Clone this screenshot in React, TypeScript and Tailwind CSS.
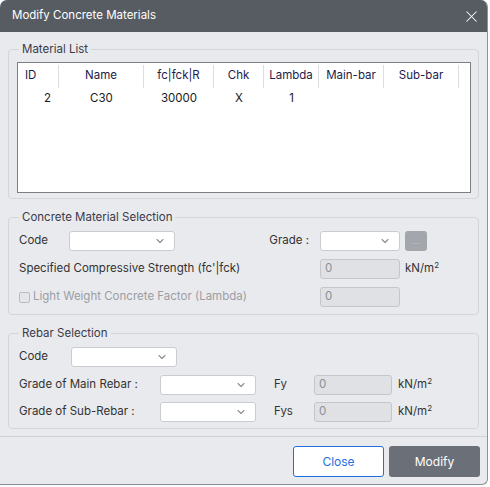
import { ChevronDown, X } from "lucide-react";

const font = { fontFamily: "Inter, 'Noto Sans', sans-serif" };

const cols = [
  { label: "ID", w: "w-[41px]", align: "text-left pl-[7px]" },
  { label: "Name", w: "w-[85px]", align: "text-center" },
  { label: "fc|fck|R", w: "w-[70px]", align: "text-center" },
  { label: "Chk", w: "w-[50px]", align: "text-center" },
  { label: "Lambda", w: "w-[55px]", align: "text-center" },
  { label: "Main-bar", w: "w-[65px]", align: "text-center" },
  { label: "Sub-bar", w: "w-[75px]", align: "text-center" },
];

const row = ["2", "C30", "30000", "X", "1", "", ""];

function Select({ w }: { w: string }) {
  return (
    <div className={`${w} h-[20px] bg-white border border-[#c9ccd1] rounded-[3px] flex items-center justify-end pr-[8px]`}>
      <ChevronDown size={12} strokeWidth={2.2} className="text-[#8a8f96]" />
    </div>
  );
}

function ReadOnly({ w }: { w: string }) {
  return (
    <div className={`${w} h-[20px] bg-[#dfe1e5] border border-[#c3c6cb] rounded-[3px] flex items-center pl-[4px] text-[#8b8f96]`}>
      0
    </div>
  );
}

function Unit() {
  return (
    <span className="text-[#333]">
      kN/m<sup className="text-[8px]">2</sup>
    </span>
  );
}

function Group({ title, children, cls }: { title: string; children: React.ReactNode; cls: string }) {
  return (
    <fieldset className={`border border-[#d3d5d9] rounded-[4px] px-[10px] ${cls}`}>
      <legend className="px-[3px] leading-[16px] text-[#3a3a4a]">{title}</legend>
      {children}
    </fieldset>
  );
}

export default function App() {
  return (
    <div className="w-[490px] h-[487px] bg-white text-[11.5px] text-[#333]" style={font}>
      <div className="w-[488px] h-[485px] bg-[#e9eaed] border-r border-b border-[#8e9196] rounded-t-[7px] rounded-br-[6px] flex flex-col overflow-hidden">
        <div className="h-[32px] bg-[#575c63] flex items-center justify-between pl-[12px] pr-[6px] text-white text-[11.5px]">
          <span>Modify Concrete Materials</span>
          <X size={19} strokeWidth={1.3} />
        </div>

        <div className="px-[8px] pt-[9px] flex flex-col">
          <Group title="Material List" cls="pt-[5px] pb-[5px]">
            <div className="-ml-[2px] -mr-[3px] h-[131px] bg-white border border-[#7d7f83]">
              <div className="flex pt-[2px]">
                {cols.map((c) => (
                  <div
                    key={c.label}
                    className={`${c.w} ${c.align} h-[23px] leading-[21px] text-[#1c1b4a] border-r border-[#dcdde0]`}
                  >
                    {c.label}
                  </div>
                ))}
              </div>
              <div className="flex h-[21px] items-center">
                {cols.map((c, i) => (
                  <div
                    key={c.label}
                    className={`${c.w} ${i === 0 ? "text-right pr-[8px]" : "text-center"} text-[#1a1a1a]`}
                  >
                    {row[i]}
                  </div>
                ))}
              </div>
            </div>
          </Group>

          <Group title="Concrete Material Selection" cls="mt-[10px] pt-[6px] pb-[7px] flex flex-col gap-[8px]">
            <div className="flex items-center">
              <span className="w-[50px]">Code</span>
              <Select w="w-[106px]" />
              <span className="w-[145px] text-right pr-[11px]">Grade :</span>
              <Select w="w-[80px]" />
              <div className="ml-[5px] w-[22px] h-[20px] rounded-[3px] bg-[#a3a7ad] text-[#c8cbd0] text-[8px] flex items-center justify-center">...</div>
            </div>
            <div className="flex items-center">
              <span className="w-[301px]">Specified Compressive Strength (fc'|fck)</span>
              <ReadOnly w="w-[80px]" />
              <span className="ml-[5px]"><Unit /></span>
            </div>
            <div className="flex items-center">
              <span className="w-[301px] flex items-center text-[#9a9ea5]">
                <span className="w-[11px] h-[11px] border border-[#b9bcc1] rounded-[2px] bg-[#e4e5e8] mr-[3px]" />
                Light Weight Concrete Factor (Lambda)
              </span>
              <ReadOnly w="w-[80px]" />
            </div>
          </Group>

          <Group title="Rebar Selection" cls="mt-[10px] pt-[6px] pb-[6px] flex flex-col">
            <div className="flex items-center">
              <span className="w-[52px]">Code</span>
              <Select w="w-[106px]" />
            </div>
            <div className="mt-[8px] flex items-center">
              <span className="w-[141px]">Grade of Main Rebar :</span>
              <Select w="w-[96px]" />
              <span className="ml-[18px] w-[40px]">Fy</span>
              <ReadOnly w="w-[78px]" />
              <span className="ml-[6px]"><Unit /></span>
            </div>
            <div className="mt-[7px] flex items-center">
              <span className="w-[141px]">Grade of Sub-Rebar :</span>
              <Select w="w-[96px]" />
              <span className="ml-[18px] w-[40px]">Fys</span>
              <ReadOnly w="w-[78px]" />
              <span className="ml-[6px]"><Unit /></span>
            </div>
          </Group>
        </div>

        <div className="mt-[7px] border-t border-[#cfd1d5] flex justify-end gap-[5px] pt-[9px] pr-[7px] text-[12px]">
          <button className="w-[91px] h-[31px] bg-white border border-[#1f6fe0] rounded-[3px] text-[#1f6fe0]">Close</button>
          <button className="w-[91px] h-[31px] bg-[#6b7078] rounded-[3px] text-white">Modify</button>
        </div>
      </div>
    </div>
  );
}
